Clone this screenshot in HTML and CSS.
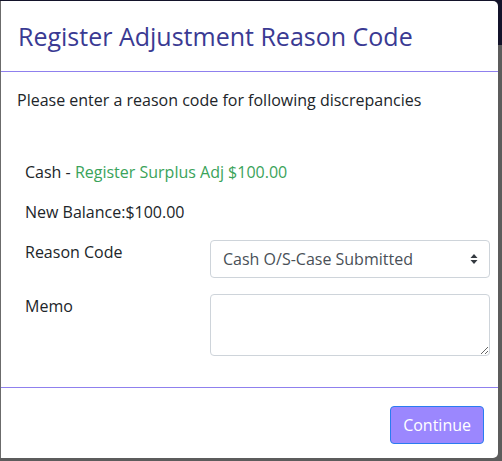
FILE: index.html
```html
<!DOCTYPE html>
<html lang="en">

<head>
  <meta charset="UTF-8">
  <meta name="viewport" content="width=device-width, initial-scale=1.0">
  <title>Register Adjustment Reason Code</title>
  <link rel="stylesheet" href="styles.css">
</head>

<body>
  <div class="backdrop">
    <div class="modal">
      <header class="modal-header">
        <h1>Register Adjustment Reason Code</h1>
      </header>

      <div class="modal-body">
        <p class="intro">Please enter a reason code for following discrepancies</p>

        <form class="reason-form">
          <div class="line">Cash - <span class="surplus">Register Surplus Adj $100.00</span></div>
          <div class="line">New Balance:$100.00</div>

          <div class="field">
            <label for="reason">Reason Code</label>
            <div class="select-wrap">
              <select id="reason" name="reason">
                <option>Cash O/S-Case Submitted</option>
              </select>
              <svg class="caret" width="8" height="12" viewBox="0 0 8 12" aria-hidden="true">
                <path d="M4 1 L7.5 5 H0.5 Z M4 11 L0.5 7 H7.5 Z" fill="#343a40" />
              </svg>
            </div>
          </div>

          <div class="field">
            <label for="memo">Memo</label>
            <textarea id="memo" name="memo"></textarea>
          </div>
        </form>
      </div>

      <footer class="modal-footer">
        <button type="button" class="btn-continue">Continue</button>
      </footer>
    </div>
  </div>
</body>

</html>
```

FILE: styles.css
```css
html,
body {
  margin: 0;
  height: 100%;
}

body {
  font-family: "Open Sans", "Noto Sans", sans-serif;
  color: #212529;
  background: linear-gradient(#13132a 0, #13132a 45px, #5c5c5c 45px);
}

.backdrop {
  padding-top: 1px;
}

.modal {
  box-sizing: border-box;
  width: 498px;
  height: 457px;
  background: #fff;
  border-radius: 0 5px 5px 0;
  border-left: 1px solid #6b6b6b;
  display: flex;
  flex-direction: column;
}

.modal-header {
  height: 70px;
  display: flex;
  align-items: center;
  padding-left: 17px;
  border-bottom: 1px solid #8f80ee;
}

h1 {
  margin: 0;
  font-size: 25px;
  font-weight: 400;
  color: #3a3a93;
}

.modal-body {
  flex: 1;
  padding: 16px 7px 0 16px;
  font-size: 16px;
}

.intro {
  margin: 0 0 48px;
  line-height: 24px;
}

.reason-form {
  padding-left: 8px;
  display: flex;
  flex-direction: column;
  gap: 16px;
}

.line {
  line-height: 24px;
}

.surplus {
  color: #3aa35a;
}

.field {
  display: flex;
  align-items: start;
}

.field label {
  width: 185px;
  line-height: 24px;
}

.select-wrap {
  position: relative;
  width: 280px;
}

select,
textarea {
  box-sizing: border-box;
  width: 280px;
  font-family: inherit;
  font-size: 16px;
  color: #495057;
  background: #fff;
  border: 1px solid #ced4da;
  border-radius: 4px;
}

select {
  appearance: none;
  display: block;
  height: 38px;
  padding: 0 30px 0 12px;
}

.caret {
  position: absolute;
  right: 12px;
  top: 13px;
  pointer-events: none;
}

textarea {
  display: block;
  height: 62px;
  padding: 6px 12px;
}

.modal-footer {
  height: 71px;
  box-sizing: border-box;
  border-top: 1px solid #8f80ee;
  display: flex;
  justify-content: flex-end;
  align-items: start;
  padding: 18px 14px 0 0;
}

.btn-continue {
  height: 38px;
  padding: 0 12px;
  font-family: inherit;
  font-size: 16px;
  color: #fff;
  background: #9b87fe;
  border: 1px solid #2a7cf0;
  border-radius: 4px;
  cursor: pointer;
}
```
